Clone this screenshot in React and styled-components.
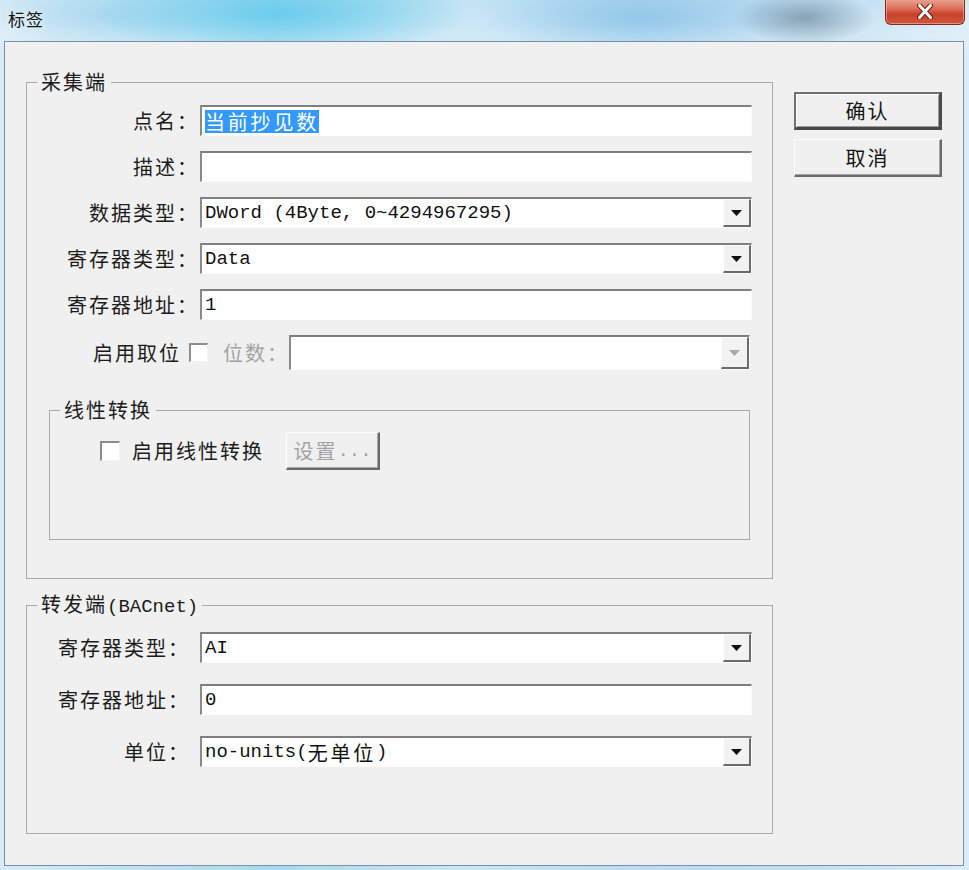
import React from 'react';
import styled, { createGlobalStyle } from 'styled-components';

const CJK = `"Noto Sans CJK SC", "Noto Sans", sans-serif`;
const MONO = `"Liberation Mono", "Noto Sans CJK SC", monospace`;

const Global = createGlobalStyle`
  html, body { margin: 0; padding: 0; background: #b7d7ec; }
  #root { width: 969px; height: 870px; }
  * { box-sizing: border-box; }
`;

const Window = styled.div`
  width: 969px;
  height: 870px;
  display: flex;
  flex-direction: column;
  padding: 0 5px 4px 4px;
  overflow: hidden;
  background:
    radial-gradient(ellipse 70px 26px at 805px 18px, rgba(60, 90, 110, 0.45), rgba(60, 90, 110, 0) 100%),
    radial-gradient(ellipse 190px 40px at 280px 14px, rgba(85, 200, 235, 0.75), rgba(85, 200, 235, 0) 100%),
    radial-gradient(ellipse 160px 36px at 640px 18px, rgba(120, 185, 228, 0.6), rgba(120, 185, 228, 0) 100%),
    radial-gradient(ellipse 120px 30px at 110px 16px, rgba(150, 205, 235, 0.5), rgba(150, 205, 235, 0) 100%),
    linear-gradient(180deg, rgba(255, 255, 255, 0) 0px, rgba(255, 255, 255, 0.25) 36px, rgba(255, 255, 255, 0.1) 60px),
    linear-gradient(90deg, #d3e9f6 0%, #b9e0f2 12%, #9fd6ee 28%, #c2e3f4 48%, #b1d8ef 66%, #bcdcf0 84%, #d7ebf7 100%);
`;

const TitleBar = styled.div`
  height: 41px;
  flex: none;
  display: flex;
  justify-content: space-between;
  align-items: flex-start;
`;

const Title = styled.div`
  margin: 8px 0 0 4px;
  font-family: ${CJK};
  font-size: 17px;
  line-height: 22px;
  letter-spacing: 1px;
  color: #151515;
  text-shadow: 0 0 6px rgba(255, 255, 255, 0.9);
`;

const CloseBtn = styled.div`
  width: 80px;
  height: 26px;
  margin-top: -1px;
  margin-right: -1px;
  border: 1px solid #7e2c20;
  border-top: none;
  border-radius: 0 0 6px 6px;
  background: linear-gradient(180deg, #eaa595 0%, #dd6c55 40%, #c8412b 60%, #d0563c 100%);
  box-shadow: inset 0 0 0 1px rgba(255, 200, 190, 0.5);
  display: flex;
  align-items: center;
  justify-content: center;
`;

const Client = styled.div`
  flex: 1;
  background: #f0f0f0;
  border: 1px solid #7890a8;
  display: grid;
  grid-template-columns: 747px 148px;
  column-gap: 21px;
  align-items: start;
  padding: 29px 0 0 21px;
`;

const LeftCol = styled.div`
  display: flex;
  flex-direction: column;
  gap: 14px;
`;

const Group = styled.fieldset`
  margin: 0;
  padding: ${(p) => p.$padding};
  border: 1px solid #a9a9a9;
  min-width: 0;
  display: flex;
  flex-direction: column;
`;

const Legend = styled.legend`
  margin-left: 10px;
  padding: 0 4px;
  font-family: ${CJK};
  font-size: 20px;
  line-height: 22px;
  letter-spacing: 2px;
  color: #1c1c1c;
`;

const Mono = styled.span`
  font-family: ${MONO};
  font-size: 19px;
  letter-spacing: 0;
`;

const Han = styled.span`
  font-family: ${CJK};
  font-size: 20px;
  letter-spacing: 2.8px;
`;

const Fields = styled.div`
  display: flex;
  flex-direction: column;
  gap: ${(p) => p.$gap};
`;

const FieldRow = styled.div`
  display: grid;
  grid-template-columns: 172px 1fr;
  column-gap: 1px;
  align-items: center;
  height: 31px;
`;

const Label = styled.div`
  font-family: ${CJK};
  font-size: 20px;
  letter-spacing: 2px;
  color: ${(p) => (p.$disabled ? '#a3a3a3' : '#1c1c1c')};
  text-align: right;
  padding-right: ${(p) => p.$pad || '0px'};
  white-space: nowrap;
  line-height: 24px;
`;

const Box = styled.div`
  height: ${(p) => p.$h || '31px'};
  flex: 1;
  min-width: 0;
  background: #fff;
  border-style: solid;
  border-width: 2px 1px 1px 2px;
  border-color: #7f7f7f #fbfbfb #fbfbfb #8a8a8a;
  display: flex;
  align-items: stretch;
  margin-right: ${(p) => p.$mr || '0'};
`;

const Value = styled.div`
  flex: 1;
  display: flex;
  align-items: center;
  padding-left: 3px;
  font-family: ${MONO};
  font-size: 19px;
  color: #111;
  white-space: nowrap;
  overflow: hidden;
`;

const Selected = styled.span`
  font-family: ${CJK};
  font-size: 20px;
  letter-spacing: 2.8px;
  line-height: 23px;
  background: #3399ff;
  color: #fff;
`;

const DropBtn = styled.div`
  width: 28px;
  flex: none;
  background: #f2f2f2;
  border-style: solid;
  border-width: 1px 2px 2px 1px;
  border-color: #fdfdfd #6b6b6b #6b6b6b #fdfdfd;
  display: flex;
  align-items: center;
  justify-content: center;
`;

const BitRow = styled.div`
  display: flex;
  align-items: center;
  height: 35px;
  padding-left: 66px;
`;

const Check = styled.div`
  width: ${(p) => p.$size || '19px'};
  height: ${(p) => p.$size || '19px'};
  flex: none;
  background: #fff;
  border-style: solid;
  border-width: 2px 1px 1px 2px;
  border-color: #8d8d8d #f4f4f4 #f4f4f4 #8d8d8d;
  margin: ${(p) => p.$margin};
`;

const InnerGroup = styled(Group)`
  margin: 29px 2px 0 22px;
`;

const LinearRow = styled.div`
  display: flex;
  align-items: center;
  height: 38px;
  padding-left: 50px;
`;

const Btn = styled.div`
  width: ${(p) => p.$w || '148px'};
  height: 38px;
  flex: none;
  margin-left: ${(p) => p.$ml || '0'};
  background: #f0f0f0;
  border-style: solid;
  border-width: 1px 2px 2px 1px;
  border-color: #fdfdfd #6a6a6a #6a6a6a #fdfdfd;
  box-shadow: inset -1px -1px 0 #a5a5a5;
  display: flex;
  align-items: center;
  justify-content: center;
  font-family: ${CJK};
  font-size: 20px;
  letter-spacing: 2px;
  color: ${(p) => (p.$disabled ? '#a3a3a3' : '#151515')};
  white-space: nowrap;
  ${(p) =>
    p.$default &&
    `
    border-width: 2px 3px 3px 2px;
    border-color: #707070 #4a4a4a #4a4a4a #707070;
    box-shadow: inset 1px 1px 0 #fdfdfd, inset -1px -1px 0 #9a9a9a;
  `}
`;

const ButtonCol = styled.div`
  margin-top: 21px;
  display: flex;
  flex-direction: column;
  gap: 9px;
`;

const Arrow = ({ disabled }) => (
  <svg width="11" height="6" viewBox="0 0 11 6">
    <polygon points="0,0 11,0 5.5,6" fill={disabled ? '#a8a8a8' : '#111'} />
  </svg>
);

const Combo = ({ children, disabled, mr, h }) => (
  <Box $mr={mr} $h={h}>
    <Value>{children}</Value>
    <DropBtn>
      <Arrow disabled={disabled} />
    </DropBtn>
  </Box>
);

const TextBox = ({ children }) => (
  <Box>
    <Value>{children}</Value>
  </Box>
);

const topFields = [
  { label: '点名：', kind: 'text', value: <Selected>当前抄见数</Selected> },
  { label: '描述：', kind: 'text', value: null },
  { label: '数据类型：', kind: 'combo', value: 'DWord (4Byte, 0~4294967295)' },
  { label: '寄存器类型：', kind: 'combo', value: 'Data' },
  { label: '寄存器地址：', kind: 'text', value: '1' },
];

const bottomFields = [
  { label: '寄存器类型：', kind: 'combo', value: 'AI' },
  { label: '寄存器地址：', kind: 'text', value: '0' },
  {
    label: '单位：',
    kind: 'combo',
    value: (
      <>
        no-units(<Han>无单位</Han>)
      </>
    ),
  },
];

const renderField = (f, pad) => (
  <FieldRow key={f.label}>
    <Label $pad={pad}>{f.label}</Label>
    {f.kind === 'combo' ? <Combo>{f.value}</Combo> : <TextBox>{f.value}</TextBox>}
  </FieldRow>
);

export default function App() {
  return (
    <>
      <Global />
      <Window>
        <TitleBar>
          <Title>标签</Title>
          <CloseBtn>
            <svg width="16" height="15" viewBox="0 0 16 15">
              <path d="M2.5 1.5 L13.5 13.5 M13.5 1.5 L2.5 13.5" stroke="#6a1c12" strokeWidth="5" strokeLinecap="round" />
              <path d="M2.5 1.5 L13.5 13.5 M13.5 1.5 L2.5 13.5" stroke="#fff" strokeWidth="3" strokeLinecap="round" />
            </svg>
          </CloseBtn>
        </TitleBar>
        <Client>
          <LeftCol>
            <Group $padding="12px 20px 38px 0">
              <Legend>采集端</Legend>
              <Fields $gap="15px">
                {topFields.map((f) => renderField(f, '0px'))}
                <BitRow>
                  <Label>启用取位</Label>
                  <Check $margin="0 15px 0 8px" />
                  <Label $disabled>位数：</Label>
                  <Combo disabled mr="2px" h="35px" />
                </BitRow>
              </Fields>
              <InnerGroup $padding="11px 0 69px 0">
                <Legend>线性转换</Legend>
                <LinearRow>
                  <Check $size="20px" $margin="0 12px 0 0" />
                  <Label>启用线性转换</Label>
                  <Btn $w="94px" $ml="22px" $disabled>
                    设置<Mono>...</Mono>
                  </Btn>
                </LinearRow>
              </InnerGroup>
            </Group>
            <Group $padding="14px 20px 66px 0">
              <Legend>
                转发端<Mono>(BACnet)</Mono>
              </Legend>
              <Fields $gap="21px">{bottomFields.map((f) => renderField(f, '9px'))}</Fields>
            </Group>
          </LeftCol>
          <ButtonCol>
            <Btn $default>确认</Btn>
            <Btn>取消</Btn>
          </ButtonCol>
        </Client>
      </Window>
    </>
  );
}
